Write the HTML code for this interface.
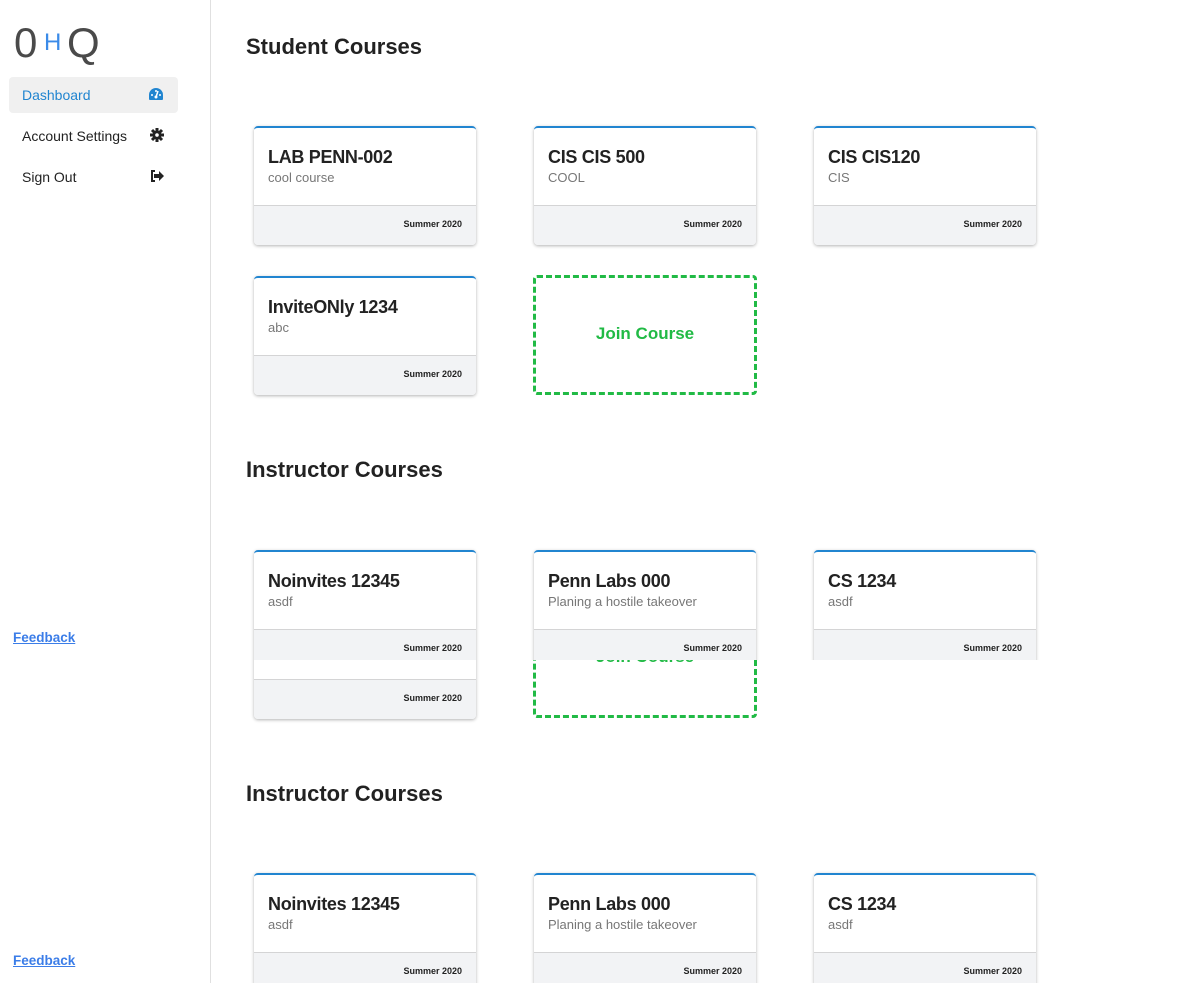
<!DOCTYPE html>
<html><head><style>
*{box-sizing:border-box;margin:0;padding:0}
html,body{width:1200px;height:983px;overflow:hidden}
body{background:#fff;font-family:"Liberation Sans",sans-serif;position:relative;color:#222}
.abs{position:absolute}
.side{left:0;top:0;width:211px;height:983px;border-right:1px solid #e0e0e0}
.lg{position:absolute;top:19px;font-size:42px;color:#4a4a4a;line-height:48px}
.item{left:9px;width:169px;height:36px;border-radius:4px;font-size:14px;padding:10px 13px;color:#222}
.item.act{background:#f0f0f0;color:#2185d0}
.item i{position:absolute;right:14px;top:10px;font-style:normal}
.fb{left:13px;font-size:13.5px;font-weight:bold;color:#3b7de8;text-decoration:underline}
h2{position:absolute;left:246px;font-size:22px;font-weight:bold;color:#222}
.card{position:absolute;width:222px;height:119px;border-radius:4px;border-top:2px solid #2185d0;box-shadow:0 1px 3px rgba(0,0,0,.3);background:#fff;overflow:hidden}
.card .t{position:absolute;left:14px;top:19px;font-size:18px;font-weight:bold;color:#222;letter-spacing:-.3px}
.card .s{position:absolute;left:14px;top:42px;font-size:13px;color:#777}
.card .f{position:absolute;left:0;right:0;top:77px;height:40px;background:#f2f3f5;border-top:1px solid #d4d4d5;font-size:9px;font-weight:bold;text-align:right;padding:13px 14px 0 0}
.join{position:absolute;width:224px;height:120px;border:3px dashed #21ba45;border-radius:4px;color:#21ba45;font-weight:bold;font-size:17px;text-align:center}
</style></head><body>
<div class="abs side"></div>
<div class="lg" style="left:14px">0</div>
<div class="lg" style="left:44px;top:31px;font-size:24px;line-height:24px;color:#3b8be8">H</div>
<div class="lg" style="left:67px">Q</div>
<div class="abs item act" style="top:77px">Dashboard<i><svg width="16" height="14" viewBox="0 0 16 14"><path d="M8 1a7 7 0 0 0-7 7v4a1 1 0 0 0 1 1h12a1 1 0 0 0 1-1V8a7 7 0 0 0-7-7z" fill="#2185d0"/><path d="M8 10L10 4" stroke="#fff" stroke-width="1.5"/><circle cx="8" cy="10" r="1.5" fill="#fff"/><circle cx="4" cy="8" r="1" fill="#fff"/><circle cx="12" cy="8" r="1" fill="#fff"/><circle cx="8" cy="4" r="1" fill="#fff"/></svg></i></div>
<div class="abs item" style="top:118px">Account Settings<i><svg width="14" height="14" viewBox="0 0 14 14"><g stroke="#222" stroke-width="3"><path d="M7 0v14M0 7h14M2 2l10 10M12 2L2 12"/></g><circle cx="7" cy="7" r="4.5" fill="#222"/><circle cx="7" cy="7" r="1.8" fill="#fff"/></svg></i></div>
<div class="abs item" style="top:159px">Sign Out<i><svg width="14" height="12" viewBox="0 0 14 12"><path d="M5 1H2v10h3" stroke="#222" stroke-width="2" fill="none"/><path d="M4 4h5V1l5 5-5 5V8H4z" fill="#222"/></svg></i></div>
<div class="abs fb" style="top:630px">Feedback</div>
<div class="abs fb" style="top:953px">Feedback</div>

<h2 style="top:34px">Student Courses</h2>
<div class="card" style="left:254px;top:126px"><div class="t">LAB PENN-002</div><div class="s">cool course</div><div class="f">Summer 2020</div></div>
<div class="card" style="left:534px;top:126px"><div class="t">CIS CIS 500</div><div class="s">COOL</div><div class="f">Summer 2020</div></div>
<div class="card" style="left:814px;top:126px"><div class="t">CIS CIS120</div><div class="s">CIS</div><div class="f">Summer 2020</div></div>
<div class="card" style="left:254px;top:276px"><div class="t">InviteONly 1234</div><div class="s">abc</div><div class="f">Summer 2020</div></div>
<div class="join" style="left:533px;top:275px;padding-top:46px">Join Course</div>

<div class="card" style="left:254px;top:600px"><div class="f">Summer 2020</div></div>
<div class="join" style="left:533px;top:598px;padding-top:46px">Join Course</div>

<div class="abs" style="left:212px;top:420px;width:988px;height:240px;background:#fff;overflow:hidden">
<h2 style="left:34px;top:37px">Instructor Courses</h2>
<div class="card" style="left:42px;top:130px"><div class="t">Noinvites 12345</div><div class="s">asdf</div><div class="f">Summer 2020</div></div>
<div class="card" style="left:322px;top:130px"><div class="t">Penn Labs 000</div><div class="s">Planing a hostile takeover</div><div class="f">Summer 2020</div></div>
<div class="card" style="left:602px;top:130px"><div class="t">CS 1234</div><div class="s">asdf</div><div class="f">Summer 2020</div></div>
</div>

<h2 style="top:781px">Instructor Courses</h2>
<div class="card" style="left:254px;top:873px"><div class="t">Noinvites 12345</div><div class="s">asdf</div><div class="f">Summer 2020</div></div>
<div class="card" style="left:534px;top:873px"><div class="t">Penn Labs 000</div><div class="s">Planing a hostile takeover</div><div class="f">Summer 2020</div></div>
<div class="card" style="left:814px;top:873px"><div class="t">CS 1234</div><div class="s">asdf</div><div class="f">Summer 2020</div></div>
</body></html>
